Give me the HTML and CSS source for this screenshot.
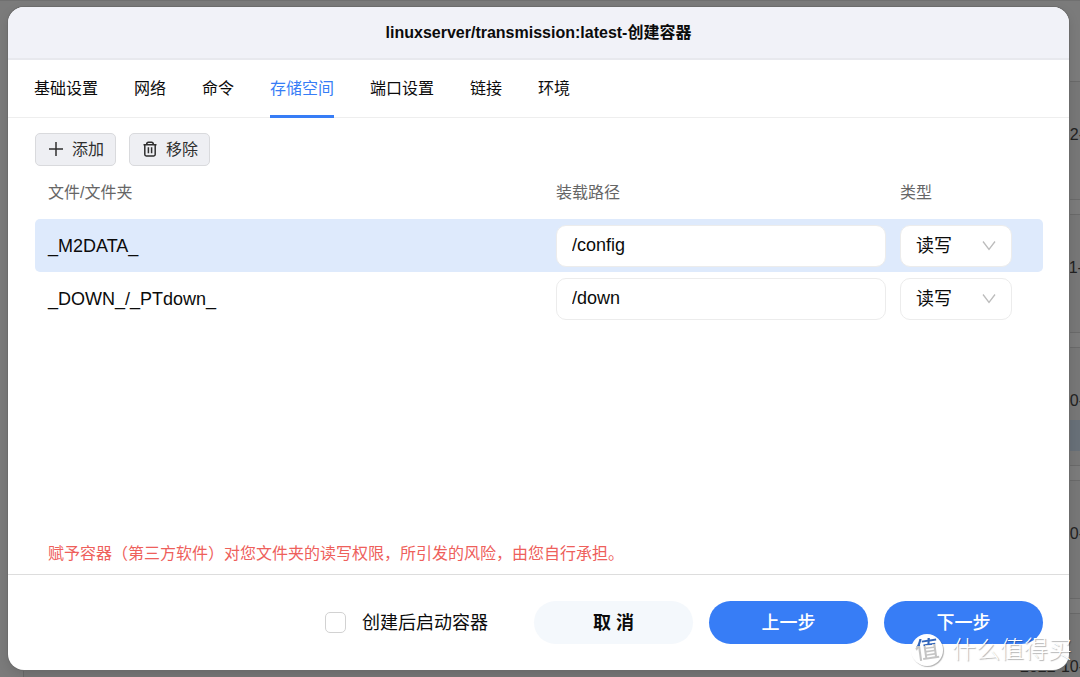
FILE: index.html
```html
<!DOCTYPE html>
<html lang="zh-CN">
<head>
<meta charset="utf-8">
<meta name="viewport" content="width=device-width, initial-scale=1">
<title>linuxserver/transmission:latest-创建容器</title>
<link rel="stylesheet" href="styles.css">
</head>
<body>
<div class="page">
  <div class="backdrop" aria-hidden="true">
    <div class="backdrop-list">
      <div class="backdrop-card"><span class="backdrop-date">2022-12-</span></div>
      <div class="backdrop-card"><span class="backdrop-date">2022-11-</span></div>
      <div class="backdrop-card"><span class="backdrop-date">2022-10-</span><span class="backdrop-tag"></span></div>
      <div class="backdrop-card"><span class="backdrop-date">2022-10-</span></div>
      <div class="backdrop-card"><span class="backdrop-date">2022-10-</span></div>
    </div>
  </div>

  <main class="dialog" role="dialog" aria-labelledby="dialog-title">
    <header class="dialog-header">
      <h1 class="dialog-title" id="dialog-title">linuxserver/transmission:latest-创建容器</h1>
    </header>

    <nav class="tabs">
      <a class="tab" href="#basic">基础设置</a>
      <a class="tab" href="#network">网络</a>
      <a class="tab" href="#command">命令</a>
      <a class="tab tab-active" href="#storage" aria-current="page">存储空间</a>
      <a class="tab" href="#ports">端口设置</a>
      <a class="tab" href="#links">链接</a>
      <a class="tab" href="#env">环境</a>
    </nav>

    <section class="content">
      <div class="toolbar">
        <button class="tool-button" type="button">
          <svg class="icon" viewBox="0 0 16 16" aria-hidden="true"><path d="M8 1v14M1 8h14"/></svg>
          添加
        </button>
        <button class="tool-button" type="button">
          <svg class="icon" viewBox="0 0 16 16" aria-hidden="true"><path d="M1.5 3.7h13M4.6 3.5q.2-2.2 1.8-2.2h3.2q1.6 0 1.8 2.2M2.8 4v9.6q0 1.4 1.4 1.4h7.6q1.4 0 1.4-1.4V4M6.4 6.3v5.9M9.6 6.3v5.9"/></svg>
          移除
        </button>
      </div>

      <table class="mounts">
        <thead>
          <tr>
            <th class="col-file" scope="col">文件/文件夹</th>
            <th class="col-path" scope="col">装载路径</th>
            <th class="col-type" scope="col">类型</th>
          </tr>
        </thead>
        <tbody>
          <tr class="row-selected">
            <td class="col-file">_M2DATA_</td>
            <td class="col-path"><input class="path-input" type="text" value="/config" aria-label="装载路径"></td>
            <td class="col-type">
              <div class="select-box">
                <select class="type-select" aria-label="类型"><option>读写</option></select>
                <svg class="chevron" viewBox="0 0 14 10" aria-hidden="true"><path d="M1 .5l6 8 6-8"/></svg>
              </div>
            </td>
          </tr>
          <tr>
            <td class="col-file">_DOWN_/_PTdown_</td>
            <td class="col-path"><input class="path-input" type="text" value="/down" aria-label="装载路径"></td>
            <td class="col-type">
              <div class="select-box">
                <select class="type-select" aria-label="类型"><option>读写</option></select>
                <svg class="chevron" viewBox="0 0 14 10" aria-hidden="true"><path d="M1 .5l6 8 6-8"/></svg>
              </div>
            </td>
          </tr>
        </tbody>
      </table>

      <p class="warning">赋予容器（第三方软件）对您文件夹的读写权限，所引发的风险，由您自行承担。</p>
    </section>

    <footer class="dialog-footer">
      <label class="start-option" for="start-after">
        <input class="checkbox" type="checkbox" id="start-after">
        创建后启动容器
      </label>
      <button class="pill pill-plain" type="button">取 消</button>
      <button class="pill pill-primary" type="button">上一步</button>
      <button class="pill pill-primary" type="button">下一步</button>
    </footer>
  </main>

  <div class="watermark">
    <span class="watermark-badge"><span class="watermark-mark">值</span></span>
    <span class="watermark-text">什么值得买</span>
  </div>
</div>
</body>
</html>
```
FILE: styles.css
```css
* {
  box-sizing: border-box;
}

body {
  margin: 0;
  background: #7b7b7b;
  color: #0b0b0b;
  font-family: "Liberation Sans", "Noto Sans CJK SC", sans-serif;
  font-size: 16px;
  line-height: 24px;
}

button,
input,
select {
  margin: 0;
  color: inherit;
  font: inherit;
}

.page {
  position: relative;
  display: flex;
  min-height: 100vh;
  padding: 7px 11px 7px 8px;
  overflow: hidden;
}

/* Dimmed container list behind the dialog */
.backdrop {
  position: absolute;
  inset: 0;
  overflow: hidden;
  border-top: 1px solid #707070;
}

.backdrop-list {
  display: flex;
  flex-direction: column;
  gap: 14px;
  padding: 80px 0 0 23px;
}

.backdrop-card {
  position: relative;
  display: flex;
  flex: none;
  justify-content: flex-end;
  height: 119px;
  padding-top: 41px;
  border: 1px solid #6a6a6a;
  border-right: 0;
  background: #777777;
}

.backdrop-date {
  width: 60px;
  color: #222222;
  white-space: nowrap;
}

.backdrop-tag {
  position: absolute;
  top: 72px;
  right: 0;
  width: 60px;
  height: 31px;
  background: #687078;
}

.dialog {
  position: relative;
  display: flex;
  flex: 1;
  flex-direction: column;
  overflow: hidden;
  border-radius: 16px;
  background: #ffffff;
  box-shadow: 0 0 0 1px #6c6c6c, 0 4px 12px rgba(0, 0, 0, 0.12);
}

.dialog-header {
  padding: 14px 16px 13px;
  border-bottom: 2px solid #e8e9ee;
  background: #f1f2f8;
  text-align: center;
}

.dialog-title {
  margin: 0;
  font-size: 16px;
  font-weight: 700;
}

.tabs {
  display: flex;
  gap: 36px;
  padding: 0 26px;
  border-bottom: 1px solid #eeeeee;
}

.tab {
  margin-bottom: -1px;
  padding: 17px 0 14px;
  border-bottom: 3px solid transparent;
  color: inherit;
  text-decoration: none;
}

.tab-active {
  border-bottom-color: #377df6;
  color: #377df6;
}

.content {
  display: flex;
  flex: 1;
  flex-direction: column;
  padding: 15px 26px 8px 27px;
}

.toolbar {
  display: flex;
  gap: 13px;
}

.tool-button {
  display: flex;
  gap: 8px;
  align-items: center;
  height: 33px;
  padding: 0 11px 0 12px;
  border: 1px solid #d9dadd;
  border-radius: 5px;
  background: #eeeff3;
  color: #2f2f2f;
}

.icon {
  width: 16px;
  height: 16px;
  margin-bottom: 2px;
  fill: none;
  stroke: currentColor;
  stroke-width: 1.5;
}

.mounts {
  width: 100%;
  border-collapse: collapse;
  table-layout: fixed;
}

.mounts th {
  height: 53px;
  padding: 0;
  color: #666666;
  font-weight: 400;
  text-align: left;
}

.mounts td {
  height: 53px;
  padding: 0;
  font-size: 18px;
}

.mounts .col-file {
  padding-left: 13px;
}

.mounts .col-path {
  width: 344px;
  padding-right: 14px;
}

.mounts .col-type {
  width: 143px;
}

.row-selected td {
  background: #deeafc;
}

.row-selected td:first-child {
  border-radius: 5px 0 0 5px;
}

.row-selected td:last-child {
  border-radius: 0 5px 5px 0;
}

.path-input,
.type-select {
  display: block;
  width: 100%;
  height: 42px;
  padding: 0 15px;
  border: 1px solid #ececec;
  border-radius: 10px;
  background: #ffffff;
}

.select-box {
  position: relative;
  width: 112px;
}

.type-select {
  appearance: none;
}

.chevron {
  position: absolute;
  top: 16px;
  right: 16px;
  width: 14px;
  height: 10px;
  fill: none;
  stroke: #bcbcbc;
  stroke-width: 1.3;
  pointer-events: none;
}

.warning {
  margin: auto 0 0;
  padding-left: 13px;
  color: #ee605b;
}

.dialog-footer {
  display: flex;
  gap: 16px;
  align-items: center;
  justify-content: flex-end;
  padding: 26px;
  border-top: 1px solid #dddddd;
  font-size: 18px;
}

.start-option {
  display: flex;
  gap: 16px;
  align-items: center;
  margin-right: 30px;
}

.checkbox {
  width: 21px;
  height: 21px;
  appearance: none;
  border: 1px solid #d2d2d2;
  border-radius: 5px;
  background: #ffffff;
}

.checkbox:checked {
  background: #377df6;
}

.pill {
  width: 159px;
  height: 43px;
  border: 0;
  border-radius: 22px;
  font-weight: 500;
}

.pill-plain {
  background: #f4f8fc;
  font-weight: 700;
}

.pill-primary {
  background: #377df6;
  color: #ffffff;
}

.watermark {
  position: absolute;
  right: 8px;
  bottom: 11px;
  display: flex;
  gap: 9px;
  align-items: center;
  pointer-events: none;
}

.watermark-badge {
  display: grid;
  width: 32px;
  height: 32px;
  place-items: center;
  border-radius: 50%;
  background: #ffffff;
  box-shadow: 1px 1px 1px rgba(0, 0, 0, 0.3);
}

.watermark-mark {
  background: linear-gradient(#3366bb 30%, #c4c4c4 30%);
  background-clip: text;
  color: transparent;
  font-size: 24px;
  font-weight: 500;
  transform: rotate(-8deg);
}

.watermark-text {
  color: #ffffff;
  font-size: 24px;
  font-weight: 300;
  line-height: 32px;
  text-shadow: 1px 1px 1px rgba(0, 0, 0, 0.3);
}
```
